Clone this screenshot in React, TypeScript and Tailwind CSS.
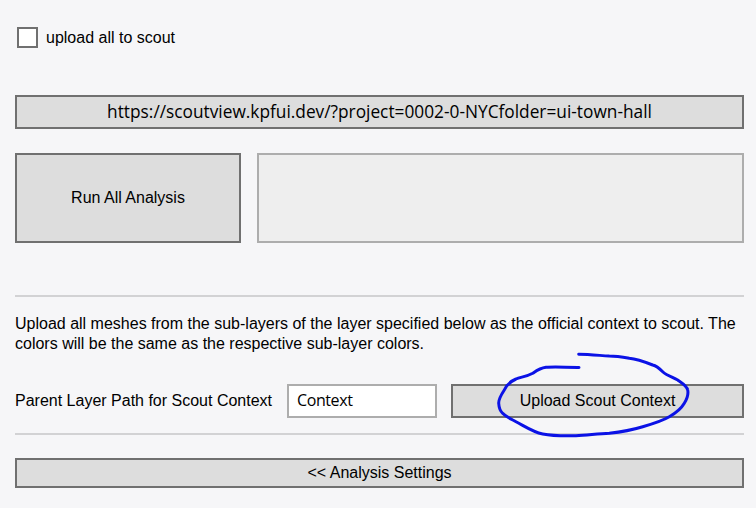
const arial = "font-['Liberation_Sans',Arial,sans-serif]";
const segoe = "font-['Open_Sans','Noto_Sans',sans-serif]";

function GrayButton({ label, className = '' }: { label: string; className?: string }) {
  return (
    <button
      className={`flex items-center justify-center bg-[#dddddd] border-2 border-[#707070] text-[16px] text-black ${arial} ${className}`}
    >
      {label}
    </button>
  );
}

export default function App() {
  return (
    <div className="relative w-[756px] h-[508px] bg-[#f6f6f8] overflow-hidden">
      <div className="flex flex-col pl-[15px] pr-[12px]">
        {/* upload toggle */}
        <label className={`flex items-center gap-2 mt-[27px] ml-[2px] h-[21px] text-[16px] text-black ${arial}`}>
          <span className="shrink-0 w-[21px] h-[21px] border-2 border-[#707070] bg-white" />
          upload all to scout
        </label>

        {/* scout url */}
        <div
          className={`mt-[47px] h-[34px] flex items-center justify-center bg-[#dddddd] border-2 border-[#707070] text-[17.3px] text-black ${segoe}`}
        >
          https://scoutview.kpfui.dev/?project=0002-0-NYCfolder=ui-town-hall
        </div>

        <div className="flex gap-4 mt-[24px] h-[90px]">
          <GrayButton label="Run All Analysis" className="shrink-0 w-[226px] h-full" />
          <div className="flex-1 h-full bg-[#eeeeee] border-2 border-[#adadad]" />
        </div>

        <div className="mt-[52px] h-[2px] bg-[#d2d2d4]" />

        <p className={`mt-[17px] text-[16px] leading-[20px] text-black ${arial}`}>
          Upload all meshes from the sub-layers of the layer specified below as the official context to scout. The colors will be the same as the respective sub-layer colors.
        </p>

        <div className="flex items-center mt-[30px] h-[34px]">
          <span className={`shrink-0 w-[272px] text-[16px] text-black ${arial}`}>Parent Layer Path for Scout Context</span>
          <div
            className={`shrink-0 w-[150px] h-full flex items-center pl-[8px] pb-[2px] bg-white border-2 border-[#adadad] text-[16px] tracking-[-0.4px] text-black ${segoe}`}
          >
            Context
          </div>
          <GrayButton label="Upload Scout Context" className="ml-[14px] flex-1 h-full" />
        </div>

        <div className="mt-[15px] h-[2px] bg-[#d2d2d4]" />

        <GrayButton label="<< Analysis Settings" className="mt-[23px] h-[30px]" />
      </div>

      {/* hand-drawn annotation */}
      <svg className="absolute inset-0 pointer-events-none" width="756" height="508" viewBox="0 0 756 508">
        <path
          d="M579 367.5 C565 367 552 366.5 546 367.3 C540 368 536 371 532.7 373.3 C526 377 520 377 516 379 C509 382 506 386 504.3 390 C501 395 498.5 399 498.7 403.3 C499 408 500 411 502.7 413.3 C506 417 511 419 516 421.7 C526 427 533 432 542.7 434 C553 436 565 436 576 435.7 C587 435 598 434 609.3 433.3 C621 432 632 430 642.7 426.7 C652 424 662 421 669.3 416.7 C676 413 681 409 684.3 403.3 C687 399 688.5 394 687.7 390 C687 386 682 383 677.7 380 C672 377 666 375 662.7 371.7 C659 368 657 366 652.7 365 C645 362 637 359 629.3 358.3 C622 357 616 356 609.3 356 C600 355.5 590 354.5 578.7 354.3"
          fill="none"
          stroke="#0b12e6"
          strokeWidth="3"
          strokeLinecap="round"
          strokeLinejoin="round"
        />
      </svg>
    </div>
  );
}
